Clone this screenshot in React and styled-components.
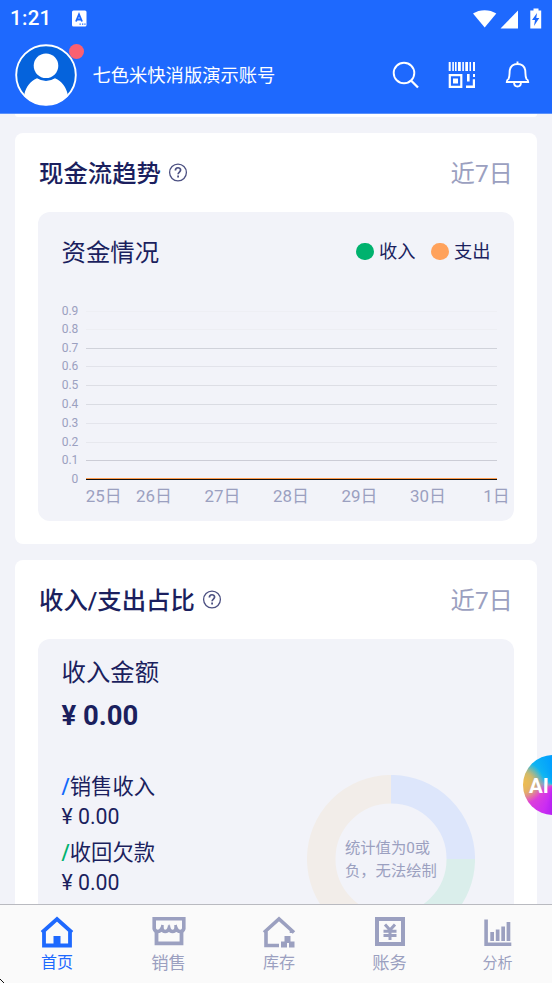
import React from "react";
import styled, { createGlobalStyle } from "styled-components";

const GlobalStyle = createGlobalStyle`
  * {
    box-sizing: border-box;
  }
  body {
    margin: 0;
    font-family: Roboto, "Noto Sans CJK SC", sans-serif;
    color: #1b1f5e;
  }
  svg {
    display: block;
    flex: none;
  }
`;

const Page = styled.div`
  position: relative;
  display: flex;
  flex-direction: column;
  width: 552px;
  height: 983px;
  overflow: hidden;
  background: #f2f3f9;
`;

const Header = styled.header`
  flex: none;
  height: 114px;
  background: #1e69fe;
  border-bottom: 1px solid #5b91fb;
  color: white;
`;
const StatusBar = styled.div`
  display: flex;
  align-items: center;
  height: 37px;
  padding: 0 9px 0 10px;
`;
const Clock = styled.span`
  width: 62px;
  font-size: 20.5px;
  font-weight: 500;
  letter-spacing: 0.3px;
  line-height: 39px;
`;
const StatusIcons = styled.div`
  display: flex;
  margin-left: auto;
`;
const AccountBar = styled.div`
  display: flex;
  align-items: center;
  height: 76px;
  padding: 0 20px 0 15px;
`;
const Avatar = styled.div`
  position: relative;
  width: 62px;
  height: 62px;
  margin-right: 15.5px;
`;
const Badge = styled.span`
  position: absolute;
  top: 0;
  right: -7px;
  width: 15px;
  height: 15px;
  border-radius: 50%;
  background: #fb6071;
`;
const AccountName = styled.span`
  margin-top: 2px;
  font-size: 18.3px;
  line-height: 28px;
`;
const Actions = styled.div`
  display: flex;
  align-items: center;
  gap: 28px;
  margin-left: auto;
`;

const Content = styled.main`
  flex: 1;
  min-height: 0;
  overflow: hidden;
  padding: 0 15px;
`;
const CardEnd = styled.div`
  height: 3px;
  margin-bottom: 16px;
  background: white;
  border-radius: 0 0 8px 8px;
`;
const Card = styled.section`
  height: ${(props) => props.$height}px;
  margin-bottom: 16px;
  padding: 0 23px;
  background: white;
  border-radius: 8px;
`;
const CardHeader = styled.div`
  display: flex;
  align-items: center;
  height: 79px;
  padding: 0 1px;
`;
const CardTitle = styled.h2`
  margin: 3px 7px 0 0;
  font-size: 24.4px;
  font-weight: 500;
  line-height: 36px;
`;
const Period = styled.span`
  margin: 3px 0 0 auto;
  color: #9ba0c0;
  font-size: 24.4px;
  line-height: 36px;
`;
const Panel = styled.div`
  height: ${(props) => props.$height}px;
  background: #f2f3f9;
  border-radius: 12px;
`;
const ChartHeader = styled.div`
  display: flex;
  align-items: center;
  height: 79px;
  padding: 0 23.5px;
`;
const PanelTitle = styled.h3`
  margin: 3px 0 0;
  font-size: 24.4px;
  font-weight: 400;
  line-height: 36px;
`;
const Legend = styled.div`
  display: flex;
  gap: 16px;
  margin: 1px 0 0 auto;
`;
const LegendItem = styled.span`
  display: flex;
  align-items: center;
  gap: 5px;
  font-size: 18.3px;
  line-height: 28px;
  &::before {
    content: "";
    width: 17.5px;
    height: 17.5px;
    margin-bottom: 1px;
    border-radius: 50%;
    background: ${(props) => props.$color};
  }
`;
const ChartText = styled.text`
  fill: #9ba0c0;
  font-size: ${(props) => props.$size}px;
`;

const RatioPanel = styled(Panel)`
  padding: 14px 39px 0 23.5px;
  ${PanelTitle} {
    margin: 0;
    padding-top: 2px;
  }
`;
const Total = styled.div`
  margin-top: 7px;
  font-size: 27.5px;
  font-weight: 700;
  line-height: 36px;
`;
const RatioBody = styled.div`
  display: flex;
  justify-content: space-between;
  margin-top: 37px;
`;
const Entry = styled.div`
  height: 66px;
`;
const EntryLabel = styled.div`
  font-size: 21.3px;
  line-height: 32px;
  &::before {
    content: "/";
    color: ${(props) => props.$color};
    font-weight: 500;
  }
`;
const EntryAmount = styled.div`
  font-size: 21.3px;
  line-height: 27px;
`;
const Donut = styled.div`
  display: grid;
  place-items: center;
  width: 168px;
  height: 168px;
  margin-top: 4px;
  > * {
    grid-area: 1 / 1;
  }
`;
const DonutText = styled.p`
  width: 94px;
  margin: 2px 0 0 2px;
  color: #9ba0c0;
  font-size: 15.3px;
  line-height: 23px;
  white-space: nowrap;
`;

const TabBar = styled.nav`
  display: grid;
  grid-template-columns: 112px 111px 110px 111px 105px;
  flex: none;
  height: 79px;
  padding-left: 1px;
  border-top: 1px solid #b9bac0;
  background: #fafafa;
`;
const Tab = styled.div`
  display: flex;
  flex-direction: column;
  align-items: center;
  padding-top: 11px;
  color: ${(props) => (props.$active ? "#1e69fe" : "#9ba0c0")};
  font-size: ${(props) => props.$size}px;
  line-height: 24px;
  svg {
    margin-bottom: 3px;
  }
`;
const AiButton = styled.div`
  position: absolute;
  top: 755px;
  right: -31px;
  width: 60px;
  height: 60px;
  padding-left: 6px;
  border-radius: 50%;
  background: radial-gradient(circle at 0 46%, #f0bd4e 0, #f0bd4ecc 10px, transparent 21px),
    conic-gradient(from 0deg, #008cff, #3b37f2 90deg, #9a12f2 160deg, #cb2df2 200deg, #e044d4 240deg, #87a0c8 275deg, #12b8f0 310deg, #009dff);
  color: white;
  font-size: 20.5px;
  font-weight: 700;
  line-height: 62px;
`;
const Corner = styled.svg`
  position: absolute;
  left: 0;
  bottom: 0;
`;

const gridLines = [
  { label: "0.9", y: 20, color: "#eeeff4" },
  { label: "0.8", y: 38, color: "#edeef3" },
  { label: "0.7", y: 57, color: "#d0d2da" },
  { label: "0.6", y: 75, color: "#e2e3ea" },
  { label: "0.5", y: 94, color: "#dddee5" },
  { label: "0.4", y: 113, color: "#dadce3" },
  { label: "0.3", y: 132, color: "#e4e5ec" },
  { label: "0.2", y: 151, color: "#e7e8ee" },
  { label: "0.1", y: 169, color: "#cccdd6" },
  { label: "0", y: 188, color: "#111111" },
];
const days = ["26日", "27日", "28日", "29日", "30日", "1日"];

const HelpIcon = () => (
  <svg width="20" height="20" viewBox="0 0.5 20 20" fill="none" stroke="#4c5082">
    <circle cx="10" cy="10" r="8.4" strokeWidth="1.3" />
    <path d="M7.4 8c0-3.7 5.2-3.5 5.2-.4 0 1.9-2.5 2-2.5 4.2" strokeWidth="1.7" />
    <path d="M10.1 13.1v1.8" strokeWidth="1.8" />
  </svg>
);

const CashChart = () => (
  <svg width="476" height="228" viewBox="0 0 476 228">
    {gridLines.map((line) => (
      <React.Fragment key={line.label}>
        <ChartText $size={12} x="40.3" y={line.y + 4} textAnchor="end">
          {line.label}
        </ChartText>
        <rect x="48" y={line.y} width="411" height="1" fill={line.color} />
      </React.Fragment>
    ))}
    <rect x="48" y="187" width="411" height="1" fill="#ff9d50" />
    <ChartText $size={16.9} x="47.7" y="211">
      25日
    </ChartText>
    {days.map((day, i) => (
      <ChartText key={day} $size={16.9} x={116 + i * 68.5} y="211" textAnchor="middle">
        {day}
      </ChartText>
    ))}
  </svg>
);

const HomeIcon = () => (
  <svg width="34" height="32" viewBox="0 0 34 32">
    <path d="M2 16.5 17 3l15 13.5M4 15v14.5h26V15" fill="none" stroke="currentColor" strokeWidth="3.8" />
    <path d="M13.5 20h7v10h-7z" fill="currentColor" />
  </svg>
);
const ShopIcon = () => (
  <svg width="34" height="32" viewBox="0 0 34 32" fill="none" stroke="currentColor">
    <path d="M4.5 14v13.3h25V14" strokeWidth="3.8" />
    <path d="M2.200 2.800h29.600v10c-1 3.500-6 3.500-7.500 0-1.500 3.500-6 3.500-7.300 0-1.500 3.500-6 3.500-7.300 0C8 16.300 3.200 16.300 2.200 12.800z" strokeWidth="3.600" />
    <path d="M10.500 9v5M23.500 9v5M17 9.500v4" strokeWidth="2.400" />
  </svg>
);
const StockIcon = () => (
  <svg width="34" height="32" viewBox="0 0 34 32">
    <path d="M2 16.500 17 3l15 13.500M4 15v14.500h13M29.500 15v2" fill="none" stroke="currentColor" strokeWidth="3.600" />
    <path d="M22.500 20h6v5.500h4v6h-5.500v-4.500h-2v4.500h-6v-6h3.500z" fill="currentColor" />
  </svg>
);
const BillIcon = () => (
  <svg width="34" height="32" viewBox="0 0 34 32" fill="none" stroke="currentColor">
    <rect x="4" y="3" width="26" height="25" strokeWidth="4" />
    <path d="M12 8.500l5 5.500 5-5.500M17 13v11M10.500 15.200h13M10.500 19.500h13" strokeWidth="3" />
  </svg>
);
const StatsIcon = () => (
  <svg width="34" height="32" viewBox="0 0 34 32" fill="currentColor">
    <path d="M3.300 3.500h3.600v23H30.300V30h-27z" />
    <path d="M9.300 16H13v9H9.300zM14.800 13.500h3.700V25h-3.700zM20.300 10.500H24V25h-3.700zM25.600 6h3.700v19h-3.700z" />
  </svg>
);

const tabs = [
  { label: "首页", icon: HomeIcon, size: 16, active: true },
  { label: "销售", icon: ShopIcon, size: 17.3 },
  { label: "库存", icon: StockIcon, size: 16 },
  { label: "账务", icon: BillIcon, size: 17.3 },
  { label: "分析", icon: StatsIcon, size: 15 },
];

const TopHeader = () => (
  <Header>
    <StatusBar>
      <Clock>1:21</Clock>
      <svg width="15" height="17" viewBox="0 0 15 17">
        <rect y="0.5" width="14.5" height="16" rx="1.5" fill="white" />
        <path d="M4 11.5 7 4.500l3 7M5 9.500h4" fill="none" stroke="#1e69fe" strokeWidth="1.9" />
        <path d="M7.500 13.500h1.300v1.300H7.500zM10 13.500h1.300v1.300H10zM12.300 13.500h1.300v1.300h-1.300z" fill="#1e69fe" />
      </svg>
      <StatusIcons>
        <svg width="71" height="22" viewBox="0 0 71 22" fill="white">
          <path d="M1 5.500C7.500 1 17.800 1 24.300 5.500L12.700 19.500z" />
          <path d="M46 2.500v18H28.500z" />
          <path d="M61.500 0.500h5v2h2.700v18H58.300v-18h3.200z" />
          <path d="M65 5 60 12h3l-1 6 5.300-8h-3z" fill="#1e69fe" />
        </svg>
      </StatusIcons>
    </StatusBar>
    <AccountBar>
      <Avatar>
        <svg width="62" height="62" viewBox="0 0 62 62">
          <circle cx="31" cy="31" r="29.8" fill="#0563dc" stroke="white" strokeWidth="1.9" />
          <circle cx="31" cy="21.7" r="12.300" fill="white" />
          <path d="M22 34.200q9 5.500 18 0C47 37.500 51 43 52.500 49.500v3A30.500 30.500 0 0 1 9.500 52.500v-3C11 43 15 37.500 22 34.200z" fill="white" />
        </svg>
        <Badge />
      </Avatar>
      <AccountName>七色米快消版演示账号</AccountName>
      <Actions>
        <svg width="28" height="28" viewBox="0 0 28 28" fill="none" stroke="white" strokeWidth="1.900">
          <circle cx="12" cy="12" r="10.300" />
          <path d="M19 19.500l7 7" strokeWidth="2.300" />
        </svg>
        <svg width="28" height="28" viewBox="0 0 28 28" fill="white">
          <path d="M0.700 1h2v9h-2zM4.300 1h1.600v9H4.300zM7 1h1.600v9H7zM10 1h2.800v9H10zM14.300 1h1.600v9h-1.600zM17.300 1H20v9h-2.700zM21.500 1h1.500v9h-1.500zM25 1h2v9h-2z" />
          <path d="M1.800 14.200h11.500v11.700H1.800z" fill="none" stroke="white" strokeWidth="2.200" />
          <path d="M5 17.500h5v5H5zM19 13h2.600v7.500H19zM25 13h2v3h-2zM18 24.500h6.800v-6.200H27V27h-9z" />
        </svg>
        <svg width="28" height="28" viewBox="0 0 28 28" fill="none" stroke="white" strokeWidth="1.900">
          <path d="M13.500 0.500v2.500M4.500 18c1.500-2.500.8-6 1.300-9C7.500 1 19.500 1 21.200 9c.5 3-.2 6.500 1.300 9q1.700.8 1.700 3H2.800q0-2.200 1.700-3z" />
          <path d="M10 21.500c.3 5.300 6.700 5.300 7 0" />
        </svg>
      </Actions>
    </AccountBar>
  </Header>
);

const App = () => {
  return (
    <Page>
      <GlobalStyle />
      <TopHeader />
      <Content>
        <CardEnd />
        <Card $height={411}>
          <CardHeader>
            <CardTitle>现金流趋势</CardTitle>
            <HelpIcon />
            <Period>近7日</Period>
          </CardHeader>
          <Panel $height={309}>
            <ChartHeader>
              <PanelTitle>资金情况</PanelTitle>
              <Legend>
                <LegendItem $color="#00b26e">收入</LegendItem>
                <LegendItem $color="#ffa25c">支出</LegendItem>
              </Legend>
            </ChartHeader>
            <CashChart />
          </Panel>
        </Card>
        <Card $height={460}>
          <CardHeader>
            <CardTitle>收入/支出占比</CardTitle>
            <HelpIcon />
            <Period>近7日</Period>
          </CardHeader>
          <RatioPanel $height={357}>
            <PanelTitle>收入金额</PanelTitle>
            <Total>¥ 0.00</Total>
            <RatioBody>
              <div>
                <Entry>
                  <EntryLabel $color="#1269fb">销售收入</EntryLabel>
                  <EntryAmount>¥ 0.00</EntryAmount>
                </Entry>
                <Entry>
                  <EntryLabel $color="#00b26e">收回欠款</EntryLabel>
                  <EntryAmount>¥ 0.00</EntryAmount>
                </Entry>
              </div>
              <Donut>
                <svg width="168" height="168" viewBox="0 0 168 168" fill="none" strokeWidth="28.500">
                  <path d="M84 14.200A69.800 69.800 0 0 1 153.800 84" stroke="#dde6fb" />
                  <path d="M153.800 84A69.800 69.800 0 0 1 84 153.800" stroke="#daeeeb" />
                  <path d="M84 153.800A69.800 69.800 0 0 1 84 14.200" stroke="#f2ede9" />
                </svg>
                <DonutText>
                  统计值为0或
                  <br />
                  负，无法绘制
                </DonutText>
              </Donut>
            </RatioBody>
          </RatioPanel>
        </Card>
      </Content>
      <TabBar>
        {tabs.map(({ label, icon: Icon, size, active }) => (
          <Tab key={label} $size={size} $active={active}>
            <Icon />
            {label}
          </Tab>
        ))}
      </TabBar>
      <AiButton>AI</AiButton>
      <Corner width="4" height="4" viewBox="0 0 4 4">
        <path d="M0 0h1v1h1v1h1v1h1v1H3V3H2V2H1V1H0z" fill="#111" />
      </Corner>
    </Page>
  );
};

export default App;
